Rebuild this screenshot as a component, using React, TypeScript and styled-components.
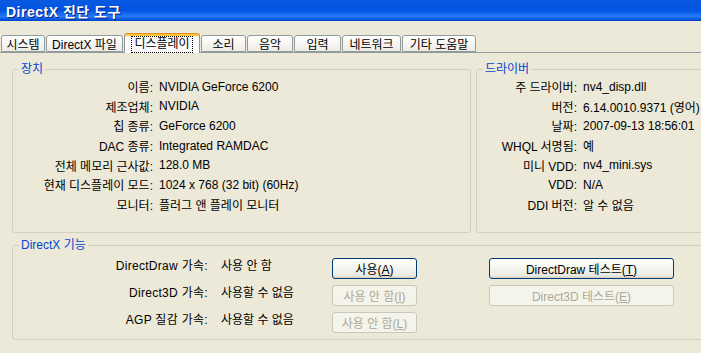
import React from "react";
import styled, { createGlobalStyle } from "styled-components";

const GlobalStyle = createGlobalStyle`
  html, body {
    margin: 0;
    padding: 0;
    overflow: hidden;
    background: #ece9d8;
  }
  body {
    font-family: "Liberation Sans", "Noto Sans CJK KR", sans-serif;
    font-size: 12px;
    color: #000;
  }
`;

const Window = styled.div`
  width: 716px;
  height: 353px;
  background: #ece9d8;
  display: flex;
  flex-direction: column;
`;

const TitleBar = styled.div`
  height: 21px;
  display: flex;
  align-items: center;
  padding-left: 6px;
  background: linear-gradient(
    to bottom,
    #0a5ae0 0%,
    #0054e3 50%,
    #1b6cf2 68%,
    #2a7bf8 78%,
    #0b5ce6 90%,
    #0042c4 100%
  );
`;

const TitleText = styled.span`
  color: #fff;
  font-weight: bold;
  font-size: 14px;
  letter-spacing: 0.5px;
  text-shadow: 1px 1px 0 #0a1883;
`;

const TabStrip = styled.div`
  margin-top: 12px;
  height: 19px;
  display: flex;
  align-items: flex-end;
  padding-left: 1px;
  border-bottom: 1px solid #919b9c;
`;

const Tab = styled.div<{ $w: number; $active?: boolean }>`
  box-sizing: border-box;
  width: ${(p) => p.$w}px;
  height: ${(p) => (p.$active ? 20 : 17)}px;
  margin-right: 1px;
  margin-bottom: ${(p) => (p.$active ? -1 : 0)}px;
  position: relative;
  display: flex;
  align-items: center;
  justify-content: center;
  white-space: nowrap;
  border: 1px solid #919b9c;
  border-bottom: ${(p) => (p.$active ? "none" : "1px solid #919b9c")};
  border-top-color: ${(p) => (p.$active ? "#e68b2c" : "#919b9c")};
  border-radius: 3px 3px 0 0;
  background: ${(p) =>
    p.$active
      ? "#fcfcfe"
      : "linear-gradient(to bottom, #ffffff 0%, #f7f6f2 50%, #ecebe6 100%)"};
  box-shadow: ${(p) => (p.$active ? "inset 0 2px 0 #ffc83c" : "none")};
  padding-top: ${(p) => (p.$active ? 1 : 0)}px;
`;

const FocusRing = styled.span`
  outline: 1px dotted #000;
  outline-offset: 0;
  padding: 1px 2px;
  line-height: 13px;
`;

const Panel = styled.div`
  padding: 16px 0 0 12px;
  display: flex;
  flex-direction: column;
  gap: 12px;
`;

const TopRow = styled.div`
  display: flex;
  gap: 5px;
`;

const Group = styled.div<{ $w?: number; $h: number }>`
  box-sizing: border-box;
  position: relative;
  ${(p) => (p.$w ? `width: ${p.$w}px;` : "flex: 1;")}
  height: ${(p) => p.$h}px;
  border: 1px solid #d0d0bf;
  border-radius: 3px;
`;

const Legend = styled.span`
  position: absolute;
  top: -8px;
  left: 6px;
  padding: 0 2px;
  line-height: 14px;
  background: #ece9d8;
  color: #0046d5;
  white-space: nowrap;
`;

const InfoGrid = styled.div<{ $label: number }>`
  display: grid;
  grid-template-columns: ${(p) => p.$label}px 1fr;
  grid-auto-rows: 19.6px;
  column-gap: 6px;
  align-items: center;
  padding-top: 7px;
`;

const Label = styled.span`
  text-align: right;
  white-space: nowrap;
`;

const Value = styled.span`
  white-space: nowrap;
`;

const FeatureGrid = styled.div`
  display: grid;
  grid-template-columns: 195px 124px 157px 184px;
  grid-auto-rows: 27px;
  padding-top: 12px;
`;

const FeatureLabel = styled.span`
  text-align: right;
  white-space: nowrap;
  line-height: 17px;
  letter-spacing: 0.3px;
`;

const FeatureValue = styled.span`
  padding-left: 13px;
  white-space: nowrap;
  line-height: 17px;
`;

const Button = styled.button<{ $w: number }>`
  box-sizing: border-box;
  width: ${(p) => p.$w}px;
  height: 21px;
  padding: 0;
  font-family: "Liberation Sans", "Noto Sans CJK KR", sans-serif;
  font-size: 12px;
  border-radius: 3px;
  border: 1px solid #003c74;
  color: #000;
  background: linear-gradient(
    to bottom,
    #ffffff 0%,
    #f6f6f2 40%,
    #ecebe4 85%,
    #d6d0c5 100%
  );
  &:disabled {
    border-color: #c9c7ba;
    color: #aca899;
    background: #f5f4ea;
  }
`;

const EmptyCell = styled.span``;

const tabs: { label: string; w: number; active?: boolean }[] = [
  { label: "시스템", w: 44 },
  { label: "DirectX 파일", w: 77 },
  { label: "디스플레이", w: 76, active: true },
  { label: "소리", w: 45 },
  { label: "음악", w: 46 },
  { label: "입력", w: 47 },
  { label: "네트워크", w: 59 },
  { label: "기타 도움말", w: 74 },
];

const device: [string, string][] = [
  ["이름:", "NVIDIA GeForce 6200"],
  ["제조업체:", "NVIDIA"],
  ["칩 종류:", "GeForce 6200"],
  ["DAC 종류:", "Integrated RAMDAC"],
  ["전체 메모리 근사값:", "128.0 MB"],
  ["현재 디스플레이 모드:", "1024 x 768 (32 bit) (60Hz)"],
  ["모니터:", "플러그 앤 플레이 모니터"],
];

const driver: [string, string][] = [
  ["주 드라이버:", "nv4_disp.dll"],
  ["버전:", "6.14.0010.9371 (영어)"],
  ["날짜:", "2007-09-13 18:56:01"],
  ["WHQL 서명됨:", "예"],
  ["미니 VDD:", "nv4_mini.sys"],
  ["VDD:", "N/A"],
  ["DDI 버전:", "알 수 없음"],
];

export default function App() {
  return (
    <>
      <GlobalStyle />
      <Window>
        <TitleBar>
          <TitleText>DirectX 진단 도구</TitleText>
        </TitleBar>
        <TabStrip>
          {tabs.map((t) => (
            <Tab key={t.label} $w={t.w} $active={t.active}>
              {t.active ? <FocusRing>{t.label}</FocusRing> : t.label}
            </Tab>
          ))}
        </TabStrip>
        <Panel>
          <TopRow>
            <Group $w={459} $h={164}>
              <Legend>장치</Legend>
              <InfoGrid $label={140}>
                {device.map(([l, v]) => (
                  <React.Fragment key={l}>
                    <Label>{l}</Label>
                    <Value>{v}</Value>
                  </React.Fragment>
                ))}
              </InfoGrid>
            </Group>
            <Group $h={164}>
              <Legend>드라이버</Legend>
              <InfoGrid $label={100}>
                {driver.map(([l, v]) => (
                  <React.Fragment key={l}>
                    <Label>{l}</Label>
                    <Value>{v}</Value>
                  </React.Fragment>
                ))}
              </InfoGrid>
            </Group>
          </TopRow>
          <Group $h={103}>
            <Legend>DirectX 기능</Legend>
            <FeatureGrid>
              <FeatureLabel>DirectDraw 가속:</FeatureLabel>
              <FeatureValue>사용 안 함</FeatureValue>
              <span>
                <Button $w={85}>
                  사용(<u>A</u>)
                </Button>
              </span>
              <span>
                <Button $w={185}>
                  DirectDraw 테스트(<u>T</u>)
                </Button>
              </span>

              <FeatureLabel>Direct3D 가속:</FeatureLabel>
              <FeatureValue>사용할 수 없음</FeatureValue>
              <span>
                <Button $w={85} disabled>
                  사용 안 함(<u>I</u>)
                </Button>
              </span>
              <span>
                <Button $w={185} disabled>
                  Direct3D 테스트(<u>E</u>)
                </Button>
              </span>

              <FeatureLabel>AGP 질감 가속:</FeatureLabel>
              <FeatureValue>사용할 수 없음</FeatureValue>
              <span>
                <Button $w={85} disabled>
                  사용 안 함(<u>L</u>)
                </Button>
              </span>
              <EmptyCell />
            </FeatureGrid>
          </Group>
        </Panel>
      </Window>
    </>
  );
}
